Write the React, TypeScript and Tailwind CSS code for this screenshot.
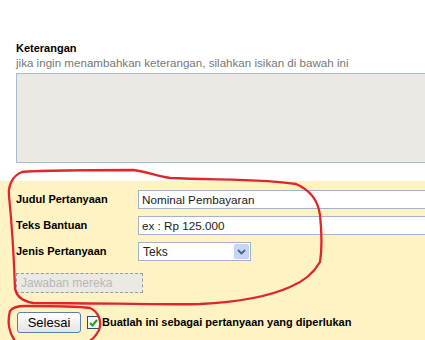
const font = { fontFamily: '"Liberation Sans", Arial, sans-serif' };

function Field({ label, children }: { label: string; children: React.ReactNode }) {
  return (
    <div className="flex h-[19px] items-center">
      <div className="w-[122px] shrink-0 text-[11px] font-bold text-black">{label}</div>
      {children}
    </div>
  );
}

function Annotation() {
  return (
    <svg
      className="pointer-events-none absolute left-0 top-0"
      width="425"
      height="340"
      viewBox="0 0 425 340"
      fill="none"
      stroke="#e0252b"
      strokeWidth="2.3"
      strokeLinecap="round"
      strokeLinejoin="round"
    >
      <path d="M9 196 C8 186 12 176 22 172 C40 170 90 170 133 170 C145 171 155 176 170 178 C220 180 270 179 296 184 C310 190 318 200 320 215 C322 235 322 250 320 262 C312 276 300 283 290 287 C270 296 240 302 200 304 C160 305 100 303 33 303 C22 301 16 296 15 288 C14 260 12 225 9 196" />
      <path d="M16 342 C9 334 7 322 10 311 C13 307 18 306 25 306 C50 306 75 306 90 308 C99 312 102 322 99 330 C96 336 92 340 88 342" />
    </svg>
  );
}

export default function App() {
  return (
    <div className="relative h-[340px] w-[425px] overflow-hidden bg-white" style={font}>
      <div className="pl-4 pt-[41px]">
        <div className="text-[11px] font-bold leading-[14px] text-black">Keterangan</div>
        <div className="text-[11.6px] leading-[15px] text-[#777]">
          jika ingin menambahkan keterangan, silahkan isikan di bawah ini
        </div>
        <div className="mt-[3px] h-[90px] w-[420px] border border-[#a9bccf] bg-[#ebe9e3]" />
      </div>

      <div className="mt-[18px] h-[200px] bg-[#fff2c3] pl-4 pt-[9px]">
        <div className="flex flex-col gap-[7px]">
          <Field label="Judul Pertanyaan">
            <div className="flex h-[19px] w-[320px] shrink-0 items-center border border-[#9fb4c9] bg-white pl-[3px] text-[11.7px] text-[#222]">
              Nominal Pembayaran
            </div>
          </Field>
          <Field label="Teks Bantuan">
            <div className="flex h-[19px] w-[320px] shrink-0 items-center border border-[#9fb4c9] bg-white pl-[3px] text-[11.7px] text-[#222]">
              ex : Rp 125.000
            </div>
          </Field>
          <Field label="Jenis Pertanyaan">
            <div className="flex h-[19px] w-[113px] items-center justify-between border border-[#9fb4c9] bg-white pl-[4px] pr-[1px] text-[12px] text-[#222]">
              <span>Teks</span>
              <span className="flex h-[15px] w-[15px] items-center justify-center rounded-[2px] bg-[#c6d6f2]">
                <svg width="9" height="6" viewBox="0 0 9 6" fill="none" stroke="#4d6185" strokeWidth="1.8">
                  <path d="M1 1 L4.5 4.5 L8 1" />
                </svg>
              </span>
            </div>
          </Field>
        </div>

        <div className="mt-[12px] flex h-[20px] w-[127px] items-center border border-dashed border-[#999] bg-[#ebe9e3] pl-[4px] text-[12px] text-[#b8b8b8]">
          Jawaban mereka
        </div>

        <div className="mt-[19px] flex items-center">
          <button className="ml-px flex h-[21px] w-[64px] items-center justify-center rounded-[3px] border border-[#5d7fa5] bg-gradient-to-b from-white to-[#e4e4e4] text-[13px] text-black">
            Selesai
          </button>
          <span className="ml-[6px] flex h-[13px] w-[13px] items-center justify-center border border-[#1c5180] bg-[#f4f4f4]">
            <svg width="9" height="8" viewBox="0 0 9 8" fill="none" stroke="#21a121" strokeWidth="2">
              <path d="M1 4 L3.5 6.5 L8 1" />
            </svg>
          </span>
          <span className="ml-[2px] text-[11px] font-bold text-black">
            Buatlah ini sebagai pertanyaan yang diperlukan
          </span>
        </div>
      </div>

      <Annotation />
    </div>
  );
}
